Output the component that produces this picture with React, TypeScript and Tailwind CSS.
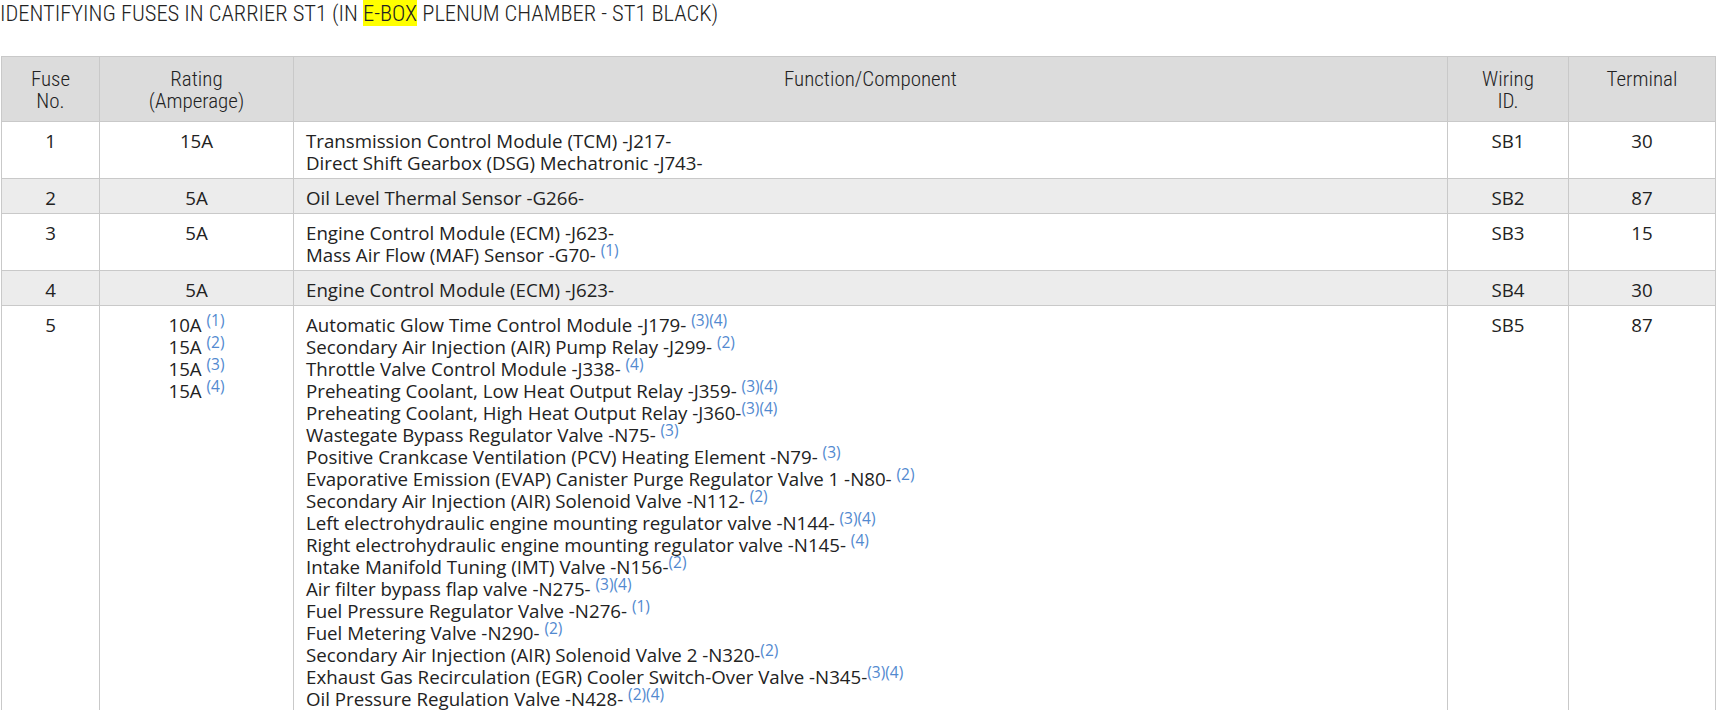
import React from 'react';

type Line = { text: string; sup?: string; gap?: boolean };

interface Row {
    fuse: string;
    ratings: Line[];
    items: Line[];
    wiring: string;
    terminal: string;
}

const rows: Row[] = [
    {
        fuse: '1',
        ratings: [{ text: '15A' }],
        items: [
            { text: 'Transmission Control Module (TCM) -J217-' },
            { text: 'Direct Shift Gearbox (DSG) Mechatronic -J743-' },
        ],
        wiring: 'SB1',
        terminal: '30',
    },
    {
        fuse: '2',
        ratings: [{ text: '5A' }],
        items: [{ text: 'Oil Level Thermal Sensor -G266-' }],
        wiring: 'SB2',
        terminal: '87',
    },
    {
        fuse: '3',
        ratings: [{ text: '5A' }],
        items: [
            { text: 'Engine Control Module (ECM) -J623-' },
            { text: 'Mass Air Flow (MAF) Sensor -G70-', sup: '(1)', gap: true },
        ],
        wiring: 'SB3',
        terminal: '15',
    },
    {
        fuse: '4',
        ratings: [{ text: '5A' }],
        items: [{ text: 'Engine Control Module (ECM) -J623-' }],
        wiring: 'SB4',
        terminal: '30',
    },
    {
        fuse: '5',
        ratings: [
            { text: '10A', sup: '(1)', gap: true },
            { text: '15A', sup: '(2)', gap: true },
            { text: '15A', sup: '(3)', gap: true },
            { text: '15A', sup: '(4)', gap: true },
        ],
        items: [
            { text: 'Automatic Glow Time Control Module -J179-', sup: '(3)(4)', gap: true },
            { text: 'Secondary Air Injection (AIR) Pump Relay -J299-', sup: '(2)', gap: true },
            { text: 'Throttle Valve Control Module -J338-', sup: '(4)', gap: true },
            { text: 'Preheating Coolant, Low Heat Output Relay -J359-', sup: '(3)(4)', gap: true },
            { text: 'Preheating Coolant, High Heat Output Relay -J360-', sup: '(3)(4)' },
            { text: 'Wastegate Bypass Regulator Valve -N75-', sup: '(3)', gap: true },
            { text: 'Positive Crankcase Ventilation (PCV) Heating Element -N79-', sup: '(3)', gap: true },
            { text: 'Evaporative Emission (EVAP) Canister Purge Regulator Valve 1 -N80-', sup: '(2)', gap: true },
            { text: 'Secondary Air Injection (AIR) Solenoid Valve -N112-', sup: '(2)', gap: true },
            { text: 'Left electrohydraulic engine mounting regulator valve -N144-', sup: '(3)(4)', gap: true },
            { text: 'Right electrohydraulic engine mounting regulator valve -N145-', sup: '(4)', gap: true },
            { text: 'Intake Manifold Tuning (IMT) Valve -N156-', sup: '(2)' },
            { text: 'Air filter bypass flap valve -N275-', sup: '(3)(4)', gap: true },
            { text: 'Fuel Pressure Regulator Valve -N276-', sup: '(1)', gap: true },
            { text: 'Fuel Metering Valve -N290-', sup: '(2)', gap: true },
            { text: 'Secondary Air Injection (AIR) Solenoid Valve 2 -N320-', sup: '(2)' },
            { text: 'Exhaust Gas Recirculation (EGR) Cooler Switch-Over Valve -N345-', sup: '(3)(4)' },
            { text: 'Oil Pressure Regulation Valve -N428-', sup: '(2)(4)', gap: true },
        ],
        wiring: 'SB5',
        terminal: '87',
    },
];

const TextLine = ({ line }: { line: Line }) => (
    <div className="whitespace-nowrap">
        {line.text}
        {line.gap ? ' ' : ''}
        {line.sup && (
            <span className="relative -top-[6px] text-[15.5px] leading-[0] text-[#5289cf]">{line.sup}</span>
        )}
    </div>
);

const narrow = "font-['Liberation_Sans_Narrow','Roboto_Condensed','Liberation_Sans',sans-serif]";
const headCell = 'border border-[#c9c9c9] px-3 pt-[11px] pb-[9px] align-top font-light leading-[22px]';
const bodyCell = 'border border-[#c9c9c9] px-3 pt-2 pb-1 align-top leading-[22px]';

export default function App() {
    return (
        <div className="min-h-screen bg-white text-[#222]">
            <div className="pr-[15px]">
                <h1 className={`${narrow} text-[22.5px] leading-[26px] text-[#222] font-light`}>
                    IDENTIFYING FUSES IN CARRIER ST1 (IN <span className="bg-[#ffff00]">E-BOX</span> PLENUM CHAMBER - ST1 BLACK)
                </h1>

                <table className="mt-[30px] ml-px w-[1714px] table-fixed border-collapse font-['Open_Sans',sans-serif] text-[18.7px]">
                    <colgroup>
                        <col className="w-[98px]" />
                        <col className="w-[194px]" />
                        <col className="w-[1154px]" />
                        <col className="w-[121px]" />
                        <col className="w-[147px]" />
                    </colgroup>
                    <thead>
                        <tr className={`bg-[#dcdcdc] ${narrow} text-[21px]`}>
                            <th className={headCell}>Fuse<br />No.</th>
                            <th className={headCell}>Rating<br />(Amperage)</th>
                            <th className={headCell}>Function/Component</th>
                            <th className={headCell}>Wiring<br />ID.</th>
                            <th className={headCell}>Terminal</th>
                        </tr>
                    </thead>
                    <tbody>
                        {rows.map((r, i) => (
                            <tr key={r.fuse} className={i % 2 === 1 ? 'bg-[#ececec]' : 'bg-white'}>
                                <td className={`${bodyCell} text-center`}>{r.fuse}</td>
                                <td className={`${bodyCell} text-center`}>
                                    {r.ratings.map((l, j) => <TextLine key={j} line={l} />)}
                                </td>
                                <td className={bodyCell}>
                                    {r.items.map((l, j) => <TextLine key={j} line={l} />)}
                                </td>
                                <td className={`${bodyCell} text-center`}>{r.wiring}</td>
                                <td className={`${bodyCell} text-center`}>{r.terminal}</td>
                            </tr>
                        ))}
                    </tbody>
                </table>
            </div>
        </div>
    );
}
